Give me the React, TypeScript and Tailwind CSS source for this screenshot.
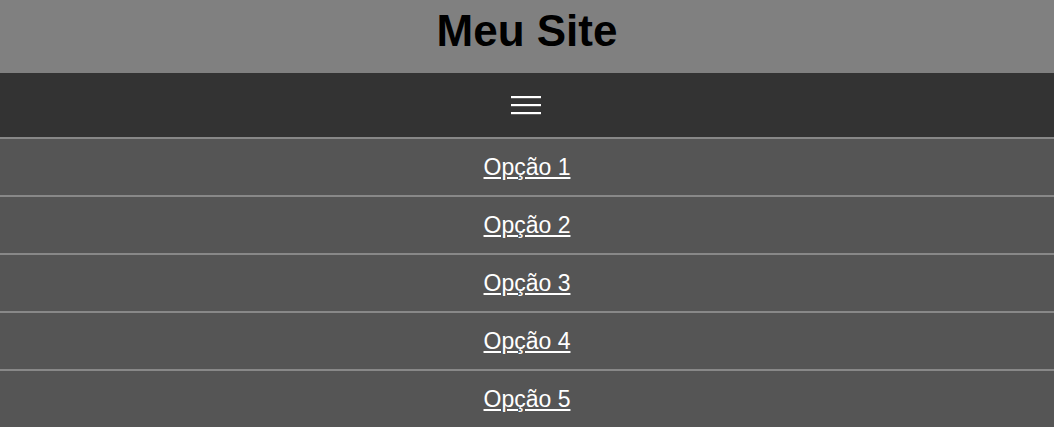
const opcoes = ['Opção 1', 'Opção 2', 'Opção 3', 'Opção 4', 'Opção 5'];

export default function App() {
  return (
    <div className="min-h-screen bg-white font-['Liberation_Sans',Arial,sans-serif]">
      {/* Cabeçalho */}
      <header className="h-[73px] bg-[#808080] flex justify-center pt-[9px]">
        <h1 className="text-[44px] font-bold text-black leading-none">Meu Site</h1>
      </header>

      {/* Menu */}
      <nav className="bg-[#333333]">
        <div className="h-16 flex items-center justify-center">
          <svg width="30" height="20" viewBox="0 0 30 20" className="-mt-[1px] -ml-[3px]">
            <rect x="0" y="1" width="30" height="2.2" fill="white" />
            <rect x="0" y="9" width="30" height="2.2" fill="white" />
            <rect x="0" y="17" width="30" height="2.2" fill="white" />
          </svg>
        </div>
        <ul>
          {opcoes.map((opcao) => (
            <li key={opcao} className="h-[58px] bg-[#555555] border-t-2 border-[#888888] flex items-center justify-center">
              <a href="#" className="text-white text-[23px] underline">{opcao}</a>
            </li>
          ))}
        </ul>
      </nav>
    </div>
  );
}
